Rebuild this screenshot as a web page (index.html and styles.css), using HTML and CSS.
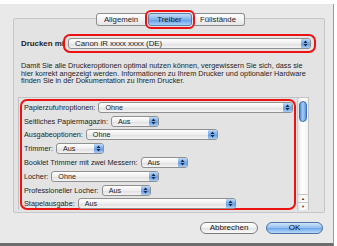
FILE: index.html
```html
<!DOCTYPE html>
<html lang="de">
<head>
  <meta charset="UTF-8" />
  <title>Drucker-Einstellungen</title>
  <link rel="stylesheet" href="styles.css">
</head>
<body>
  <div class="window">
    <div class="group">
      <div class="tabs">
        <span class="tab first">Allgemein</span>
        <span class="tab active">Treiber</span>
        <span class="tab last">Füllstände</span>
      </div>

      <div class="printer-row">
        <span class="printer-label">Drucken mit:</span>
        <div class="mark">
          <div class="popup printer">Canon iR xxxx xxxx (DE)<span class="arrows"><svg width="5" height="7" viewBox="0 0 5 7"><path d="M2.5 0.5 L4.5 3 L0.5 3 Z M0.5 4 L4.5 4 L2.5 6.5 Z" fill="#1a2a48"/></svg></span></div>
        </div>
      </div>

      <p class="info">Damit Sie alle Druckeroptionen optimal nutzen können, vergewissern Sie sich, dass sie hier korrekt angezeigt werden. Informationen zu Ihrem Drucker und optionaler Hardware finden Sie in der Dokumentation zu Ihrem Drucker.</p>

      <div class="list">
        <div class="options">
          <div class="row"><span>Papierzufuhroptionen:</span><div class="popup" style="width:187px">Ohne<span class="arrows"><svg width="5" height="7" viewBox="0 0 5 7"><path d="M2.5 0.5 L4.5 3 L0.5 3 Z M0.5 4 L4.5 4 L2.5 6.5 Z" fill="#1a2a48"/></svg></span></div></div>
          <div class="row"><span>Seitliches Papiermagazin:</span><div class="popup" style="width:40px">Aus<span class="arrows"><svg width="5" height="7" viewBox="0 0 5 7"><path d="M2.5 0.5 L4.5 3 L0.5 3 Z M0.5 4 L4.5 4 L2.5 6.5 Z" fill="#1a2a48"/></svg></span></div></div>
          <div class="row"><span>Ausgabeoptionen:</span><div class="popup" style="width:124px">Ohne<span class="arrows"><svg width="5" height="7" viewBox="0 0 5 7"><path d="M2.5 0.5 L4.5 3 L0.5 3 Z M0.5 4 L4.5 4 L2.5 6.5 Z" fill="#1a2a48"/></svg></span></div></div>
          <div class="row"><span>Trimmer:</span><div class="popup" style="width:40px">Aus<span class="arrows"><svg width="5" height="7" viewBox="0 0 5 7"><path d="M2.5 0.5 L4.5 3 L0.5 3 Z M0.5 4 L4.5 4 L2.5 6.5 Z" fill="#1a2a48"/></svg></span></div></div>
          <div class="row"><span>Booklet Trimmer mit zwei Messern:</span><div class="popup" style="width:39px">Aus<span class="arrows"><svg width="5" height="7" viewBox="0 0 5 7"><path d="M2.5 0.5 L4.5 3 L0.5 3 Z M0.5 4 L4.5 4 L2.5 6.5 Z" fill="#1a2a48"/></svg></span></div></div>
          <div class="row"><span>Locher:</span><div class="popup" style="width:100px">Ohne<span class="arrows"><svg width="5" height="7" viewBox="0 0 5 7"><path d="M2.5 0.5 L4.5 3 L0.5 3 Z M0.5 4 L4.5 4 L2.5 6.5 Z" fill="#1a2a48"/></svg></span></div></div>
          <div class="row"><span>Professioneller Locher:</span><div class="popup" style="width:41px">Aus<span class="arrows"><svg width="5" height="7" viewBox="0 0 5 7"><path d="M2.5 0.5 L4.5 3 L0.5 3 Z M0.5 4 L4.5 4 L2.5 6.5 Z" fill="#1a2a48"/></svg></span></div></div>
          <div class="row"><span>Stapelausgabe:</span><div class="popup" style="width:150px">Aus<span class="arrows"><svg width="5" height="7" viewBox="0 0 5 7"><path d="M2.5 0.5 L4.5 3 L0.5 3 Z M0.5 4 L4.5 4 L2.5 6.5 Z" fill="#1a2a48"/></svg></span></div></div>
        </div>
        <div class="scrollbar">
          <div class="thumb"></div>
          <div class="arrow">&#9650;</div>
          <div class="arrow">&#9660;</div>
        </div>
      </div>
    </div>

    <div class="buttons">
      <button class="btn">Abbrechen</button>
      <button class="btn default">OK</button>
    </div>
  </div>
</body>
</html>
```

FILE: styles.css
```css
body {
  margin: 0;
  background: #ffffff;
  font-family: 'Liberation Sans', Arial, sans-serif;
  color: #1e1e1e;
}

.window {
  width: 333px;
  height: 225px;
  margin-top: 4px;
  background: #e9e9e9;
  border-right: 1px solid #9c9c9c;
  border-bottom: 3px solid #6c6c6c;
  padding-top: 14px;
}

.group {
  margin-left: 13px;
  width: 310px;
  height: 193px;
  border: 1px solid #c6c6c6;
  border-radius: 2px;
  background: #e3e3e3;
}

.tabs {
  display: flex;
  justify-content: center;
  margin-top: -6px;
  margin-left: 2px;
}

.tab {
  height: 11px;
  line-height: 11px;
  font-size: 7.8px;
  text-align: center;
  border: 1px solid #8d8d8d;
  border-left: none;
  background: linear-gradient(#ffffff, #e6e6e6);
  color: #222;
}

.tab.first {
  border-left: 1px solid #8d8d8d;
  border-radius: 3px 0 0 3px;
  width: 49px;
}

.tab.last {
  border-radius: 0 3px 3px 0;
  width: 51px;
}

.tab.active {
  position: relative;
  z-index: 1;
  width: 42px;
  background: linear-gradient(#c4dcf6, #7fb2ec 50%, #5d9be3 51%, #a9d0f8);
  border-color: #5a7fae;
  border-left: 1px solid #5a7fae;
  margin: 0 1px 0 1px;
  outline: 2px solid #ee1111;
  outline-offset: 1px;
  border-radius: 3px;
}

.printer-row {
  display: flex;
  align-items: center;
  margin-top: 8px;
  padding-left: 7px;
}

.printer-label {
  width: 42px;
  overflow: hidden;
  white-space: nowrap;
  font-weight: bold;
  font-size: 7.9px;
}

.mark {
  border: 2px solid #ee1111;
  border-radius: 7px;
  padding: 2px 3px;
  background: #e3e3e3;
}

.popup {
  position: relative;
  height: 9px;
  line-height: 9px;
  font-size: 7.2px;
  padding-left: 6px;
  border: 1px solid #909090;
  border-radius: 3px;
  background: linear-gradient(#ffffff, #eeeeee 50%, #dedede 51%, #f4f4f4);
  color: #1e1e1e;
  white-space: nowrap;
}

.popup.printer {
  width: 235px;
  font-size: 7.9px;
}

.arrows {
  position: absolute;
  right: 0;
  top: 0;
  width: 9px;
  height: 9px;
  border-radius: 0 2px 2px 0;
  background: linear-gradient(#bcd8f6, #72a9ea 50%, #5b97e0 51%, #a6cdf6);
  display: flex;
  align-items: center;
  justify-content: center;
}

.info {
  margin: 9px 0 0 7px;
  width: 290px;
  font-size: 7.3px;
  line-height: 7.5px;
}

.list {
  display: flex;
  margin: 12px 0 0 4px;
  width: 289px;
  height: 112px;
  border: 1px solid #c2c2c2;
  border-bottom: none;
}

.options {
  flex: 1;
  border: 2px solid #ee1111;
  border-radius: 7px;
  margin: 1px 1px 0 1px;
  padding: 0 0 0 2px;
}

.row {
  display: flex;
  align-items: center;
  gap: 3px;
  height: 13.8px;
  font-size: 7.3px;
  white-space: nowrap;
}

.scrollbar {
  width: 10px;
  display: flex;
  flex-direction: column;
  background: linear-gradient(90deg, #e4e4e4, #ffffff 40%, #f2f2f2);
  border-left: 1px solid #c8c8c8;
}

.thumb {
  margin: 3px 1px 0 1px;
  height: 19px;
  border-radius: 4px;
  border: 1px solid #3d6fb3;
  background: linear-gradient(90deg, #4a86d6, #a8cdf5 45%, #5b97e0);
  flex: none;
}

.arrow {
  height: 7px;
  font-size: 4px;
  line-height: 7px;
  text-align: center;
  color: #333;
  border-top: 1px solid #c8c8c8;
}

.arrow:nth-child(2) {
  margin-top: auto;
}

.buttons {
  display: flex;
  justify-content: flex-end;
  gap: 8px;
  margin-top: 9px;
  padding-right: 10px;
}

.btn {
  height: 12px;
  width: 58px;
  padding: 0;
  font-family: 'Liberation Sans', Arial, sans-serif;
  font-size: 8px;
  line-height: 10px;
  color: #111;
  border: 1px solid #7b7b7b;
  border-radius: 6px;
  background: linear-gradient(#ffffff, #f0f0f0 50%, #e2e2e2 51%, #fbfbfb);
}

.btn.default {
  width: 57px;
  border-color: #4d72a6;
  background: linear-gradient(#d0e4fa, #8fbdf0 50%, #6aa5e9 51%, #b7daf9);
}
```
